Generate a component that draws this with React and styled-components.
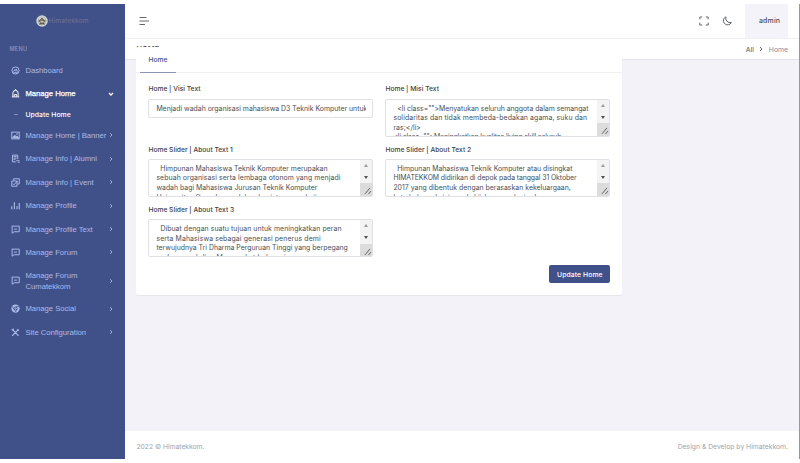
import React from 'react';
import styled, { createGlobalStyle, css } from 'styled-components';

const Global = createGlobalStyle`
  *, *::before, *::after { box-sizing: border-box; }
  body { margin: 0; background: #fff; overflow: hidden; font-family: Inter, "Noto Sans", sans-serif; }
`;

const Page = styled.div`
  display: flex;
  width: 800px;
  height: 459px;
  padding-top: 4px;
  font-size: 6.6px;
  color: #495057;
`;
const Sidebar = styled.aside`
  width: 124.5px;
  flex: none;
  background: #405189;
  color: #abb9e8;
  font-family: "Liberation Sans", Arial, sans-serif;
`;
const Brand = styled.div`
  display: flex;
  align-items: center;
  height: 34px;
  padding-left: 35.5px;
  gap: 1px;
  font: 500 6.5px Inter, sans-serif;
  letter-spacing: .15px;
  color: #66708f;
`;
const MenuTitle = styled.div`
  height: 20.5px;
  padding: 7px 0 0 9.5px;
  font: 600 5.6px/8px Inter, sans-serif;
  letter-spacing: .2px;
  color: #7d8dc4;
`;
const NavRow = styled.a`
  display: flex;
  align-items: center;
  height: ${p => (p.$tall ? 33 : 23.4)}px;
  padding: 0 11px 0 11px;
  font-size: 7.7px;
  line-height: 11px;
  letter-spacing: -0.03px;
  color: ${p => (p.$active ? '#fff' : '#abb9e8')};
  ${p => p.$active && css`-webkit-text-stroke: .25px #fff;`}
`;
const NavIcon = styled.svg`
  width: 9px;
  height: 9px;
  flex: none;
  margin-right: 5.5px;
  fill: none;
  stroke: currentColor;
  stroke-width: 2.6;
`;
const NavLabel = styled.span`
  flex: 1;
  white-space: pre;
`;
const Arrow = styled.svg`
  width: 6px;
  height: 6px;
  flex: none;
  fill: none;
  stroke: currentColor;
  stroke-width: 1;
`;
const SubRow = styled.a`
  display: flex;
  align-items: center;
  height: 18.5px;
  padding-left: 14px;
  font: 500 6.8px Inter, sans-serif;
  letter-spacing: .06px;
  color: #fff;
  &::before {
    content: '';
    width: 4px;
    height: 1px;
    margin-right: 7.5px;
    background: #7f90c6;
  }
`;
const Main = styled.main`
  flex: 1;
  display: flex;
  flex-direction: column;
  background: #f3f2f8;
  border-right: 1px solid #6fa6ba;
`;
const TopBar = styled.header`
  display: flex;
  align-items: center;
  flex: none;
  height: 34.5px;
  padding: 0 11px 0 14px;
  background: #fff;
  border-bottom: 1px solid #f0f0f3;
`;
const Spacer = styled.div`flex: 1;`;
const LineIcon = styled.svg`
  width: ${p => p.$size}px;
  height: ${p => p.$size}px;
  margin-right: ${p => p.$gap ?? 0}px;
  fill: none;
  stroke: #62666b;
  stroke-width: 1;
`;
const UserBox = styled.div`
  width: 43px;
  height: 34px;
  padding-left: 14px;
  background: #f3f3f9;
  font-weight: 500;
  font-size: 6.9px;
  line-height: 34.5px;
  letter-spacing: .2px;
`;
const TitleBar = styled.div`
  display: flex;
  justify-content: space-between;
  flex: none;
  height: 21px;
  padding: 5.2px 11px 0 12px;
  background: #fff;
  border-bottom: 1px solid #e4e4ea;
`;
const Title = styled.h1`
  margin: 0;
  padding-top: 2px;
  font-size: 7.4px;
  line-height: 8px;
  font-weight: 600;
  letter-spacing: .05px;
`;
const Crumbs = styled.nav`
  display: flex;
  align-items: center;
  height: 11px;
  gap: 4.5px;
  font-size: 6.8px;
  letter-spacing: .03px;
  color: #878a99;
`;
const CrumbLink = styled.span`color: #495057;`;
const Card = styled.section`
  position: relative;
  width: 486px;
  height: 248.5px;
  margin: -12.7px 0 0 11.9px;
  flex: none;
  background: #fff;
  border-radius: 2px;
  box-shadow: 0 1px 1px rgba(56, 65, 74, .07);
`;
const Tabs = styled.div`
  height: 26.5px;
  padding-left: 4px;
  border-bottom: 1px solid #f0f0f3;
`;
const Tab = styled.div`
  width: 35.5px;
  height: 26px;
  padding-left: 8px;
  line-height: 26.5px;
  font-size: 6.7px;
  font-weight: 500;
  letter-spacing: .03px;
  color: #405189;
  border-bottom: 1px solid #8b94ae;
`;
const Form = styled.form`
  display: grid;
  grid-template-columns: 225px 225px;
  grid-template-rows: 60.2px 60.2px 60.2px;
  column-gap: 12px;
  padding: 11px 12px 0;
`;
const Field = styled.div`
  display: flex;
  flex-direction: column;
`;
const Label = styled.label`
  height: 14.2px;
  font-size: 6.7px;
  line-height: 11.8px;
  font-weight: 500;
  letter-spacing: 0.01px;
  color: #3c4045;
  white-space: pre;
`;
const TextBox = styled.div`
  display: flex;
  height: ${p => (p.$single ? 19.5 : 38.5)}px;
  overflow: hidden;
  border: 1px solid #dfe1e5;
  border-radius: 2px;
  background: #fff;
`;
const Lines = styled.div`
  flex: 1;
  min-width: 0;
  overflow: hidden;
  padding-top: 4.2px;
  margin: ${p => (p.$single ? '0 6px 0 7px' : '0 0 0 7px')};
`;
const Line = styled.div`
  height: 9.6px;
  line-height: 9.6px;
  font-size: 6.9px;
  letter-spacing: ${p => p.$ls}px;
  white-space: pre;
`;
const ScrollTrack = styled.div`
  display: flex;
  flex-direction: column;
  width: 12.5px;
  flex: none;
  background: #f3f3f3;
`;
const ScrollButton = styled.div`
  height: 12px;
  display: flex;
  align-items: center;
  justify-content: center;
  &::after {
    content: '';
    border: 2.9px solid transparent;
    border-top-width: 0;
    border-bottom: 3px solid ${p => (p.$down ? '#505050' : '#9b9b9b')};
    transform: ${p => (p.$down ? 'rotate(180deg)' : 'none')};
  }
`;
const Grip = styled.svg`
  width: 12.5px;
  height: 13px;
  background: #dcdcdc;
  stroke: #555;
  stroke-width: .9;
`;
const Actions = styled.div`
  display: flex;
  justify-content: flex-end;
  padding: 0 12px;
`;
const Button = styled.button`
  width: 61px;
  height: 18.5px;
  padding: 1px 0 0;
  border: 0;
  border-radius: 2px;
  background: #405189;
  color: #fff;
  font: 500 6.8px Inter, sans-serif;
  letter-spacing: .1px;
`;
const Footer = styled.footer`
  display: flex;
  justify-content: space-between;
  align-items: center;
  height: 28px;
  margin-top: auto;
  padding: 3.4px 11px 0 12px;
  background: #fff;
  color: #9ea5ab;
  font-size: 6.8px;
`;
const FooterText = styled.span`letter-spacing: ${p => p.$ls}px;`;

const icons = {
  dash: <><circle cx="12" cy="12" r="9.5" /><path d="M7 15a5 5 0 0 1 10 0M12 14l3-6M6 18h12" /></>,
  home: <><path d="M5 20V11a7 7 0 0 1 14 0v9M2 21h20M9 4l3-3 3 3M9 20v-5h6v5" /></>,
  image: <><rect x="2" y="3" width="20" height="18" /><path d="M4 18l6-7 4 4 2-2 5 6z" fill="currentColor" /><circle cx="16" cy="8" r="1" /></>,
  list: <><path d="M18 14V3H4v18h9M7 7h8M7 11h8M7 15h5M14 18h9M18 22h5" /></>,
  event: <><path d="M7 7V2h15v14h-5M2 8h14v14H2zM5 15l3 3 9-10" /></>,
  bars: <path d="M2 22v-8M9 22V3M16 22v-8M22 22V5" strokeWidth="3" />,
  chat: <><path d="M2 3h20v15H8l-5 4V3M8 11h8" /></>,
  chrome: <><circle cx="12" cy="12" r="8" strokeWidth="6" /><circle cx="12" cy="12" r="2" /><path d="M12 7h10M8 14L3 6M16 14l-5 8" stroke="#405189" strokeWidth="2" /></>,
  tools: <path d="M3 21L20 4M4 4l16 17M2 6l5-4M17 3l4 4" strokeWidth="3" />,
};

function NavItem({ icon, children, open, arrow = true, ...rest }) {
  return (
    <NavRow {...rest}>
      <NavIcon viewBox="0 0 24 24">{icons[icon]}</NavIcon>
      <NavLabel>{children}</NavLabel>
      {arrow && <Arrow viewBox="0 0 6 6"><path d={open ? 'M1 2l2 2 2-2' : 'M2.2 1.2L4 3 2.2 4.8'} strokeWidth={open ? 1.3 : 0.9} /></Arrow>}
    </NavRow>
  );
}

function AreaField({ label, lines }) {
  return (
    <Field>
      <Label>{label}</Label>
      <TextBox>
        <Lines>{lines.map(([text, spacing]) => <Line key={text} $ls={spacing}>{text}</Line>)}</Lines>
        <ScrollTrack>
          <ScrollButton />
          <ScrollButton $down />
          <Grip viewBox="0 0 12.5 13"><path d="M5 11l5-6M8.5 11.2l2.5-3" /></Grip>
        </ScrollTrack>
      </TextBox>
    </Field>
  );
}

const misi = [
  ['  <li class="">Menyatukan seluruh anggota dalam semangat', -0.02],
  ['solidaritas dan tidak membeda-bedakan agama, suku dan', 0.105],
  ['ras;</li>', 0.05],
  ['<li class="">Meningkatkan kualitas living skill seluruh', -0.12],
];
const about1 = [
  ['  Himpunan Mahasiswa Teknik Komputer merupakan', 0.01],
  ['sebuah organisasi serta lembaga otonom yang menjadi', 0.09],
  ['wadah bagi Mahasiswa Jurusan Teknik Komputer', 0],
  ['Universitas Gunadarma dalam kegiatan pengkajian,', 0.08],
];
const about2 = [
  ['  Himpunan Mahasiswa Teknik Komputer atau disingkat', -0.01],
  ['HIMATEKKOM didirikan di depok pada tanggal 31 Oktober', -0.09],
  ['2017 yang dibentuk dengan berasaskan kekeluargaan,', 0.015],
  ['keterbukaan, kejujuran, kebijaksanaan, logis, dan', -0.19],
];
const about3 = [
  ['  Dibuat dengan suatu tujuan untuk meningkatkan peran', 0.065],
  ['serta Mahasiswa sebagai generasi penerus demi', 0.12],
  ['terwujudnya Tri Dharma Perguruan Tinggi yang berpegang', 0],
  ['pada pengabdian Masyarakat Indonesia.', 0.1],
];

export default function App() {
  return (
    <>
      <Global />
      <Page>
        <Sidebar>
          <Brand>
            <svg width="12" height="12" viewBox="0 0 24 24">
              <circle cx="12" cy="12" r="11.5" fill="#d3d5d6" />
              <circle cx="12" cy="12" r="8" fill="#f0f0eb" stroke="#8c8c85" />
              <path d="M5 12l7-6 7 6-3 1v4H8v-4zM6 18h12" fill="#77776c" stroke="#4e5149" strokeWidth="1.5" />
              <path d="M9 12h6v3H9z" fill="#d2c899" />
            </svg>
            Himatekkom
          </Brand>
          <MenuTitle>MENU</MenuTitle>
          <NavItem icon="dash" arrow={false}>Dashboard</NavItem>
          <NavItem icon="home" $active open>Manage Home</NavItem>
          <SubRow>Update Home</SubRow>
          <NavItem icon="image">Manage Home | Banner</NavItem>
          <NavItem icon="list">Manage Info | Alumni</NavItem>
          <NavItem icon="event">Manage Info | Event</NavItem>
          <NavItem icon="bars">Manage Profile</NavItem>
          <NavItem icon="chat">Manage Profile Text</NavItem>
          <NavItem icon="chat">Manage Forum</NavItem>
          <NavItem icon="chat" $tall>{'Manage Forum\nCumatekkom'}</NavItem>
          <NavItem icon="chrome">Manage Social</NavItem>
          <NavItem icon="tools">Site Configuration</NavItem>
        </Sidebar>
        <Main>
          <TopBar>
            <LineIcon $size={10} viewBox="0 0 10 10"><path d="M.5 1.5h7M.5 5h9.5M.5 8.5h5.5" /></LineIcon>
            <Spacer />
            <LineIcon $size={10} $gap={13} viewBox="0 0 10 10"><path d="M.8 3.3V1h2.4M6.8 1h2.4v2.3M9.2 6.7V9H6.8M3.2 9H.8V6.7" /></LineIcon>
            <LineIcon $size={10} $gap={13} viewBox="0 0 10 10"><path d="M4 .8A4.2 4.2 0 1 0 9.4 6.5 4.4 4.4 0 0 1 4 .8z" /></LineIcon>
            <UserBox>admin</UserBox>
          </TopBar>
          <TitleBar>
            <Title>HOME</Title>
            <Crumbs><CrumbLink>All</CrumbLink><LineIcon $size={6} viewBox="0 0 6 6"><path d="M2 1l2 2-2 2" /></LineIcon><span>Home</span></Crumbs>
          </TitleBar>
          <Card>
            <Tabs><Tab>Home</Tab></Tabs>
            <Form>
              <Field>
                <Label>Home | Visi Text</Label>
                <TextBox $single>
                  <Lines $single><Line $ls={0}>Menjadi wadah organisasi mahasiswa D3 Teknik Komputer untuk</Line></Lines>
                </TextBox>
              </Field>
              <AreaField label="Home | Misi Text" lines={misi} />
              <AreaField label="Home Slider | About Text 1" lines={about1} />
              <AreaField label="Home Slider | About Text 2" lines={about2} />
              <AreaField label="Home Slider | About Text 3" lines={about3} />
            </Form>
            <Actions><Button type="button">Update Home</Button></Actions>
          </Card>
          <Footer>
            <FooterText $ls={-0.04}>2022 © Himatekkom.</FooterText>
            <FooterText $ls={0}>Design &amp; Develop by Himatekkom.</FooterText>
          </Footer>
        </Main>
      </Page>
    </>
  );
}
